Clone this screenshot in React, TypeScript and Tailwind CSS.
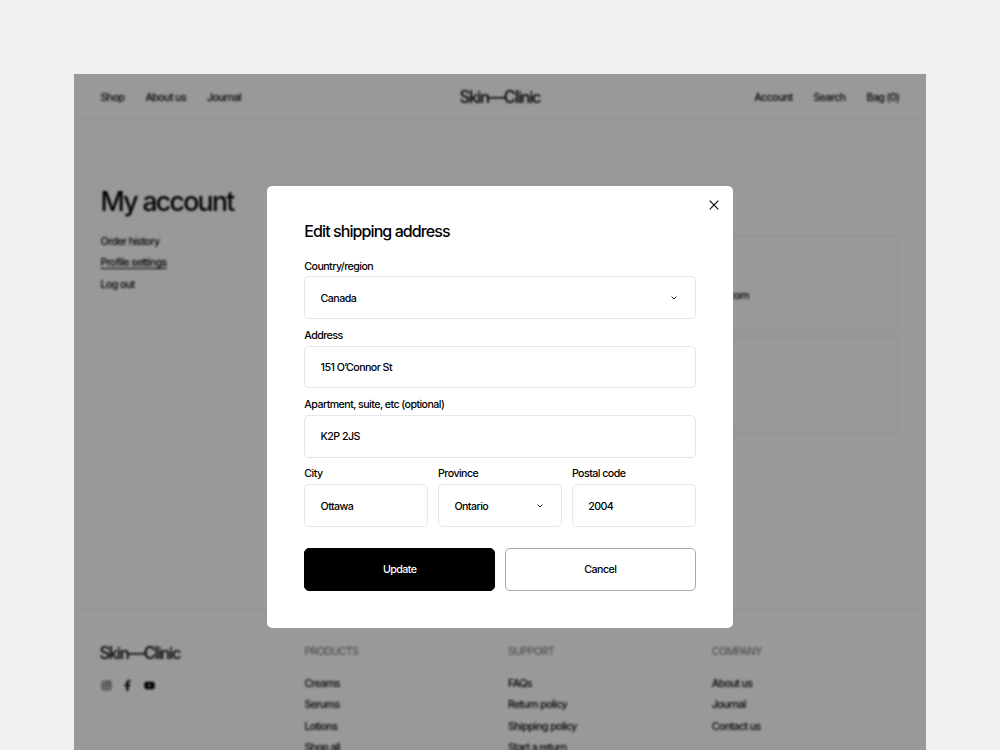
import { type ReactNode } from "react"
import { clsx } from "clsx"
import { FaFacebookF, FaInstagram, FaYoutube } from "react-icons/fa"

const footerColumns = [
  { title: "PRODUCTS", links: ["Creams", "Serums", "Lotions", "Shop all"] },
  { title: "SUPPORT", links: ["FAQs", "Return policy", "Shipping policy", "Start a return"] },
  { title: "COMPANY", links: ["About us", "Journal", "Contact us"] },
]

function Logo() {
  return <span className="text-[16.6px] leading-5 font-medium tracking-[-0.078em]">Skin—Clinic</span>
}

function Header() {
  return (
    <header className="h-11 shrink-0 grid grid-cols-3 items-center px-[26.6px] pt-[3px] border-b border-[#f0f0f0]">
      <nav className="flex gap-[21px] pt-px">
        <a>Shop</a>
        <a>About us</a>
        <a>Journal</a>
      </nav>
      <div className="text-center">
        <Logo />
      </div>
      <nav className="flex justify-end gap-[21px] pt-px">
        <a>Account</a>
        <a>Search</a>
        <a>Bag (0)</a>
      </nav>
    </header>
  )
}

function Account() {
  return (
    <main className="h-[491px] shrink-0 flex pt-[67px] px-[26.6px]">
      <aside className="w-[203.4px] shrink-0">
        <h1 className="text-[26.6px] leading-8 font-medium tracking-[-0.063em] pb-px">My account</h1>
        <nav className="mt-4 flex flex-col items-start gap-[5.3px]">
          <a>Order history</a>
          <a className="underline underline-offset-2">Profile settings</a>
          <a>Log out</a>
        </nav>
      </aside>
      <section className="flex-1 pt-[50px] flex flex-col gap-[5.5px]">
        <div className="h-24 flex items-center justify-end pr-[149.5px] pt-[25px] border border-[#f0f0f0] rounded-[5px]">
          hello@skinclinic.com
        </div>
        <div className="h-24 border border-[#f0f0f0] rounded-[5px]" />
      </section>
    </main>
  )
}

function Footer() {
  return (
    <footer className="grid grid-cols-[204.4px_203.7px_203.7px_1fr] pl-[26px] pt-[34px] border-t border-[#f0f0f0]">
      <div>
        <div className="flex -mt-px -ml-[0.6px]">
          <Logo />
        </div>
        <div className="mt-[17px] ml-[0.6px] flex items-center gap-[10.5px] text-[11px]">
          <FaInstagram />
          <FaFacebookF />
          <FaYoutube />
        </div>
      </div>
      {footerColumns.map((col) => (
        <div key={col.title}>
          <h3 className="text-[#757575] font-normal">{col.title}</h3>
          <ul className="mt-4 flex flex-col gap-[5.3px]">
            {col.links.map((link) => (
              <li key={link}>{link}</li>
            ))}
          </ul>
        </div>
      ))}
    </footer>
  )
}

function Chevron() {
  return (
    <svg width="6" height="4" viewBox="0 0 6 4" fill="none" stroke="currentColor" strokeWidth="0.9">
      <path d="M0.6 0.6 3 3 5.4 0.6" />
    </svg>
  )
}

function Field({ label, value, select }: { label: string; value: string; select?: boolean }) {
  return (
    <label className="block flex-1">
      <span className="block leading-4 pt-[0.6px] -mb-[0.6px]">{label}</span>
      <span className="mt-[2.4px] h-[42.6px] flex items-center justify-between pl-[15.3px] pr-[17.5px] border border-[#e6e6e6] rounded-[5px]">
        <span className="pt-[2px]">{value}</span>
        {select && <Chevron />}
      </span>
    </label>
  )
}

function Button({ children, primary }: { children: ReactNode; primary?: boolean }) {
  return (
    <button
      className={clsx(
        "h-[42.6px] flex-1 rounded-[5px] border pt-px",
        primary ? "bg-black border-black text-white" : "bg-white border-[#a8a8a8]",
      )}
    >
      {children}
    </button>
  )
}

function AddressModal() {
  return (
    <div className="relative w-[466px] h-[442px] bg-white rounded-[5px] px-[37.3px] pt-[35px]">
      <button className="absolute right-[13.7px] top-[13.5px]" aria-label="Close">
        <svg width="10" height="10" viewBox="0 0 10 10" fill="none" stroke="currentColor" strokeWidth="1.1">
          <path d="M0.7 0.7 9.3 9.3M9.3 0.7 0.7 9.3" />
        </svg>
      </button>
      <h2 className="text-[16px] leading-5 font-[450] tracking-[-0.057em]">Edit shipping address</h2>
      <form className="mt-[17px] flex flex-col gap-[8.3px] font-[450] tracking-[-0.052em]">
        <Field label="Country/region" value="Canada" select />
        <Field label="Address" value="151 O’Connor St" />
        <Field label="Apartment, suite, etc (optional)" value="K2P 2JS" />
        <div className="flex gap-[10px]">
          <Field label="City" value="Ottawa" />
          <Field label="Province" value="Ontario" select />
          <Field label="Postal code" value="2004" />
        </div>
        <div className="mt-[13px] flex gap-[10px]">
          <Button primary>Update</Button>
          <Button>Cancel</Button>
        </div>
      </form>
    </div>
  )
}

export default function App() {
  return (
    <div className="h-[750px] w-[1000px] overflow-hidden bg-[#f1f1f1] px-[74px] pt-[74px] font-['Inter',sans-serif] text-[10.65px] leading-4 font-medium tracking-[-0.058em] whitespace-nowrap text-black">
      <div className="relative h-[676px] overflow-hidden bg-white">
        <div className="h-[720px] flex flex-col blur-[0.9px]">
          <Header />
          <Account />
          <Footer />
        </div>
        <div className="absolute inset-0 flex items-start justify-center bg-black/40 pt-28">
          <AddressModal />
        </div>
      </div>
    </div>
  )
}
